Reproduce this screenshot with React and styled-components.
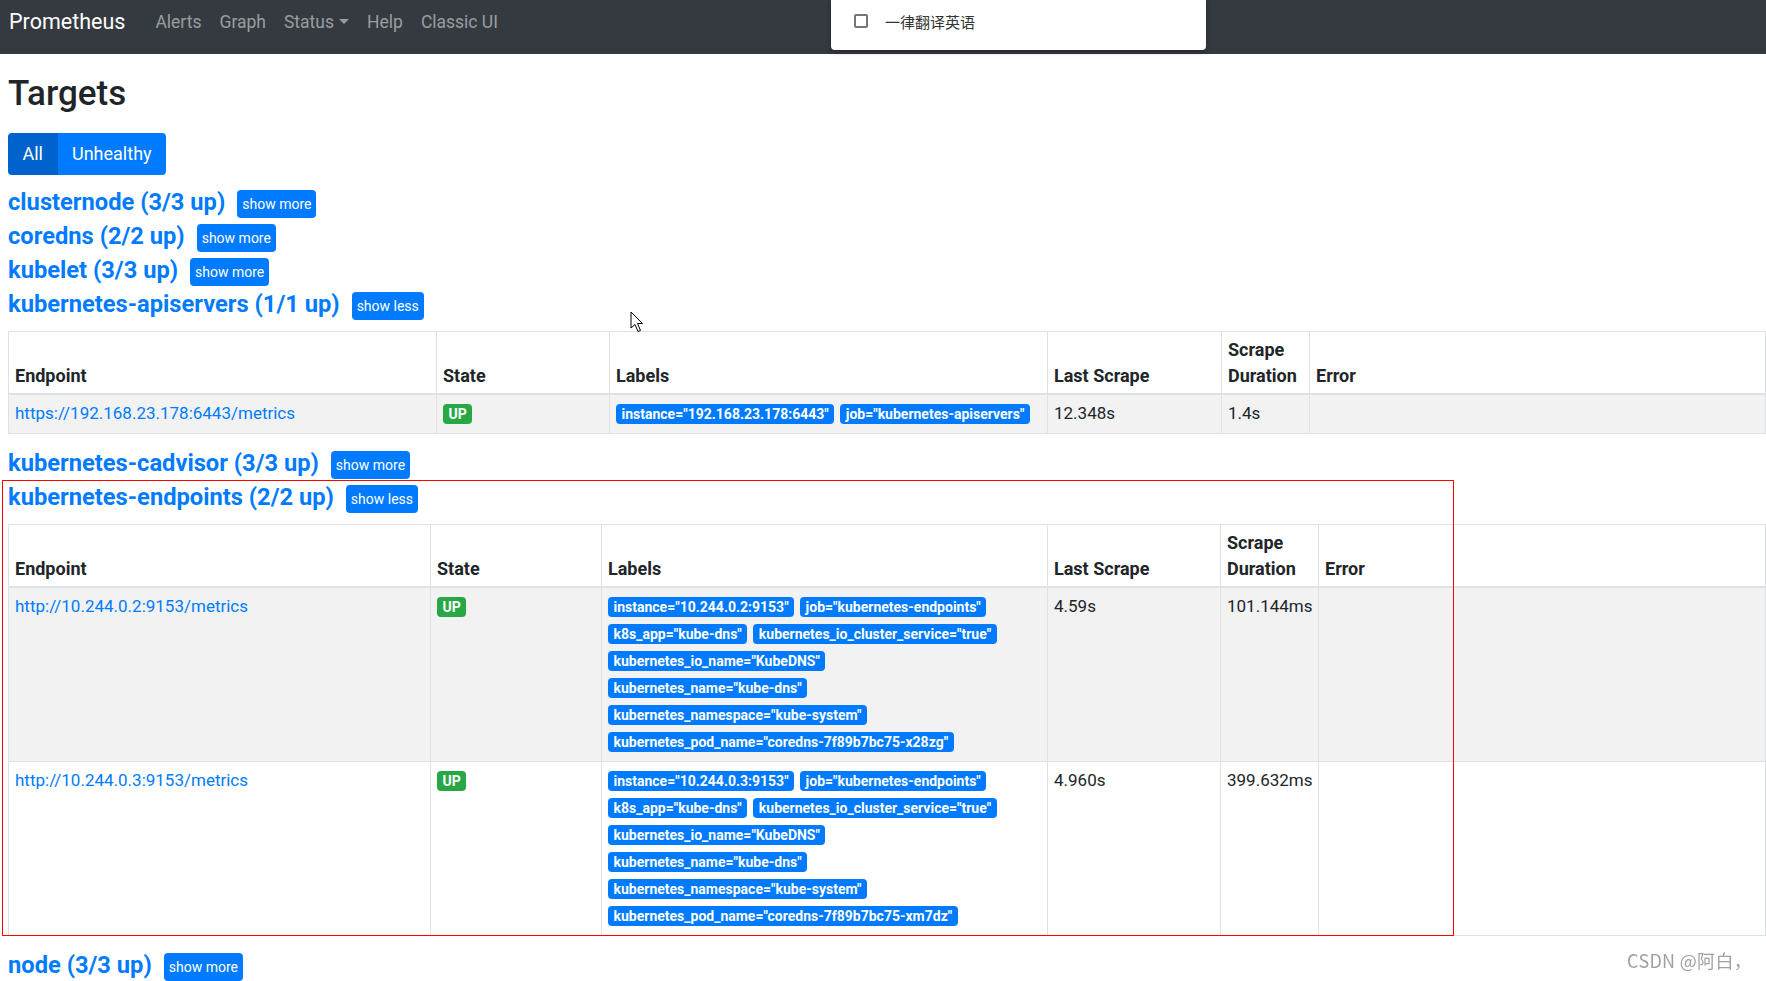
import React from 'react';
import styled, { createGlobalStyle, css } from 'styled-components';

const GlobalStyle = createGlobalStyle`
  html, body {
    margin: 0;
    padding: 0;
    overflow: hidden;
    background: #fff;
  }
  body {
    font-family: Roboto, "Noto Sans", sans-serif;
    font-size: 17px;
    line-height: 27px;
    color: #212529;
  }
  * { box-sizing: border-box; }
`;

const Page = styled.div`
  position: relative;
  width: 100%;
  min-height: 981px;
`;

const Navbar = styled.nav`
  position: relative;
  height: 54px;
  background: #343a40;
  display: flex;
  align-items: center;
  padding: 0 9px 10px;
`;

const Brand = styled.a`
  color: #fff;
  font-size: 21.5px;
  line-height: 32px;
  margin-right: 21px;
  text-decoration: none;
`;

const NavLink = styled.a`
  color: rgba(255, 255, 255, 0.5);
  font-size: 17.5px;
  padding: 0 9px;
  text-decoration: none;
  display: flex;
  align-items: center;
  ${({ $dropdown }) => $dropdown && css`
    &::after {
      content: '';
      margin-left: 5px;
      margin-top: -2px;
      border-top: 5px solid rgba(255, 255, 255, 0.5);
      border-left: 5.5px solid transparent;
      border-right: 5.5px solid transparent;
    }
  `}
`;

const TranslateBar = styled.div`
  position: absolute;
  top: 0;
  left: 831px;
  width: 375px;
  height: 50px;
  background: #fff;
  border-radius: 0 0 4px 4px;
  box-shadow: 0 2px 5px rgba(0, 0, 0, 0.35);
  display: flex;
  align-items: center;
  padding: 0 0 8px 23px;
  font-family: "Noto Sans CJK SC", sans-serif;
  font-size: 15px;
  color: #333;
`;

const CheckBox = styled.span`
  width: 14px;
  height: 14px;
  border: 2px solid #757575;
  border-radius: 2px;
  margin-right: 17px;
`;

const Main = styled.main`
  padding: 19px 0 0 8px;
`;

const Title = styled.h2`
  margin: 0 0 18px;
  font-size: 35px;
  line-height: 42px;
  font-weight: 500;
  color: #212529;
`;

const ButtonGroup = styled.div`
  display: inline-flex;
  margin-bottom: 10px;
  border-radius: 4px;
  overflow: hidden;
`;

const FilterButton = styled.button`
  font-family: inherit;
  font-size: 18px;
  line-height: 26px;
  height: 42px;
  padding: 0 14.5px;
  border: none;
  color: #fff;
  background: ${({ $active }) => ($active ? '#0062cc' : '#007bff')};
`;

const PoolSection = styled.section`
  position: relative;
  margin-bottom: ${({ $open }) => ($open ? '12px' : '0')};
`;

const PoolHeader = styled.div`
  height: 34px;
  display: flex;
  align-items: center;
`;

const PoolName = styled.a`
  color: #007bff;
  font-size: 23.7px;
  font-weight: 700;
  text-decoration: none;
`;

const ToggleButton = styled.button`
  margin: 3px 0 0 12px;
  font-family: inherit;
  font-size: 14px;
  line-height: 20px;
  height: 28px;
  padding: 4px 5px;
  border: none;
  border-radius: 4px;
  color: #fff;
  background: #007bff;
`;

const Frame = styled.div`
  position: absolute;
  top: 0;
  bottom: 0;
  left: -6px;
  width: 1452px;
  border: 1px solid #f00;
  pointer-events: none;
`;

const Table = styled.table`
  width: 100%;
  margin-top: 10px;
  border-collapse: collapse;
  table-layout: fixed;
`;

const Col = styled.col`
  width: ${({ $w }) => ($w ? `${$w}px` : 'auto')};
`;

const Th = styled.th`
  text-align: left;
  vertical-align: bottom;
  font-size: 18px;
  font-weight: 700;
  line-height: 26px;
  padding: 5px 6px 4px;
  border: 1px solid #dee2e6;
  border-bottom-width: 2px;
`;

const Tr = styled.tr`
  background: ${({ $striped }) => ($striped ? '#f2f2f2' : '#fff')};
`;

const Td = styled.td`
  vertical-align: top;
  padding: 5px 6px 6px;
  border: 1px solid #dee2e6;
  line-height: 27px;
  white-space: nowrap;
`;

const EndpointLink = styled.a`
  color: #007bff;
  text-decoration: none;
`;

const Badge = styled.span`
  display: inline-block;
  font-size: 14px;
  font-weight: 700;
  line-height: 1;
  padding: 3px 5.5px;
  border-radius: 4px;
  color: #fff;
  margin-right: 6px;
  white-space: nowrap;
  vertical-align: baseline;
  background: ${({ $color }) => $color || '#007bff'};
`;

const LabelLine = styled.div`
  line-height: 27px;
`;

const Watermark = styled.div`
  position: fixed;
  right: 14px;
  bottom: 7px;
  font-family: "Noto Sans CJK SC", sans-serif;
  font-size: 18px;
  letter-spacing: 0.3px;
  color: #a0a0a0;
`;

const Cursor = styled.svg`
  position: absolute;
  left: 630px;
  top: 311px;
`;

const pools = [
  { name: 'clusternode', up: 3, total: 3 },
  { name: 'coredns', up: 2, total: 2 },
  { name: 'kubelet', up: 3, total: 3 },
  {
    name: 'kubernetes-apiservers', up: 1, total: 1,
    cols: [428, 173, 438, 174, 88],
    targets: [
      {
        url: 'https://192.168.23.178:6443/metrics',
        labels: [['instance="192.168.23.178:6443"', 'job="kubernetes-apiservers"']],
        last: '12.348s',
        duration: '1.4s',
      },
    ],
  },
  { name: 'kubernetes-cadvisor', up: 3, total: 3 },
  {
    name: 'kubernetes-endpoints', up: 2, total: 2, highlight: true,
    cols: [422, 171, 446, 173, 98],
    targets: [
      {
        url: 'http://10.244.0.2:9153/metrics',
        labels: [
          ['instance="10.244.0.2:9153"', 'job="kubernetes-endpoints"'],
          ['k8s_app="kube-dns"', 'kubernetes_io_cluster_service="true"'],
          ['kubernetes_io_name="KubeDNS"'],
          ['kubernetes_name="kube-dns"'],
          ['kubernetes_namespace="kube-system"'],
          ['kubernetes_pod_name="coredns-7f89b7bc75-x28zg"'],
        ],
        last: '4.59s',
        duration: '101.144ms',
      },
      {
        url: 'http://10.244.0.3:9153/metrics',
        labels: [
          ['instance="10.244.0.3:9153"', 'job="kubernetes-endpoints"'],
          ['k8s_app="kube-dns"', 'kubernetes_io_cluster_service="true"'],
          ['kubernetes_io_name="KubeDNS"'],
          ['kubernetes_name="kube-dns"'],
          ['kubernetes_namespace="kube-system"'],
          ['kubernetes_pod_name="coredns-7f89b7bc75-xm7dz"'],
        ],
        last: '4.960s',
        duration: '399.632ms',
      },
    ],
  },
  { name: 'node', up: 3, total: 3 },
];

const TargetsTable = ({ cols, targets }) => (
  <Table>
    <colgroup>
      {cols.map((w, i) => <Col key={i} $w={w} />)}
      <Col />
    </colgroup>
    <thead>
      <tr>
        <Th>Endpoint</Th>
        <Th>State</Th>
        <Th>Labels</Th>
        <Th>Last Scrape</Th>
        <Th>Scrape Duration</Th>
        <Th>Error</Th>
      </tr>
    </thead>
    <tbody>
      {targets.map((t, i) => (
        <Tr key={t.url} $striped={i % 2 === 0}>
          <Td><EndpointLink href="#">{t.url}</EndpointLink></Td>
          <Td><Badge $color="#28a745">UP</Badge></Td>
          <Td>
            {t.labels.map((line, j) => (
              <LabelLine key={j}>
                {line.map((l) => <Badge key={l}>{l}</Badge>)}
              </LabelLine>
            ))}
          </Td>
          <Td>{t.last}</Td>
          <Td>{t.duration}</Td>
          <Td />
        </Tr>
      ))}
    </tbody>
  </Table>
);

const Pool = ({ pool }) => {
  const open = !!pool.targets;
  return (
    <PoolSection $open={open}>
      <PoolHeader>
        <PoolName href={`#${pool.name}`}>{`${pool.name} (${pool.up}/${pool.total} up)`}</PoolName>
        <ToggleButton>{open ? 'show less' : 'show more'}</ToggleButton>
      </PoolHeader>
      {open && <TargetsTable cols={pool.cols} targets={pool.targets} />}
      {pool.highlight && <Frame />}
    </PoolSection>
  );
};

export default function App() {
  return (
    <Page>
      <GlobalStyle />
      <Navbar>
        <Brand href="#">Prometheus</Brand>
        <NavLink href="#">Alerts</NavLink>
        <NavLink href="#">Graph</NavLink>
        <NavLink href="#" $dropdown>Status</NavLink>
        <NavLink href="#">Help</NavLink>
        <NavLink href="#">Classic UI</NavLink>
        <TranslateBar>
          <CheckBox />
          一律翻译英语
        </TranslateBar>
      </Navbar>
      <Main>
        <Title>Targets</Title>
        <ButtonGroup>
          <FilterButton $active>All</FilterButton>
          <FilterButton>Unhealthy</FilterButton>
        </ButtonGroup>
        {pools.map((p) => <Pool key={p.name} pool={p} />)}
      </Main>
      <Cursor width="14" height="22" viewBox="0 0 14 22">
        <path d="M1 1 L1 17 L5 13.5 L8 20.5 L10.5 19.5 L7.5 12.5 L12.5 12.5 Z" fill="#fff" stroke="#000" strokeWidth="1" strokeLinejoin="round" />
      </Cursor>
      <Watermark>CSDN @阿白，</Watermark>
    </Page>
  );
}
